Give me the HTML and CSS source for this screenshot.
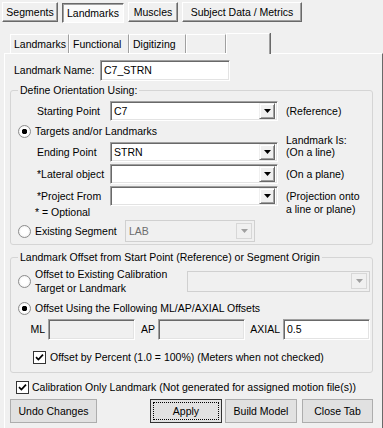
FILE: index.html
```html
<!DOCTYPE html>
<html lang="en">
<head>
  <meta charset="UTF-8" />
  <title>Landmarks</title>
  <link rel="stylesheet" href="styles.css">
</head>
<body>

<div class="maintabs">
  <div class="maintab w-seg">Segments</div>
  <div class="maintab active w-lmk">Landmarks</div>
  <div class="maintab w-mus">Muscles</div>
  <div class="maintab w-sub">Subject Data / Metrics</div>
</div>

<div class="subtabs">
  <div class="subtab w-s1">Landmarks</div>
  <div class="subtab w-s2">Functional</div>
  <div class="subtab w-s3">Digitizing</div>
  <div class="subtab w-s4"></div>
  <div class="subtab current w-s5"></div>
</div>

<div class="panel">
  <div class="name-row">
    <span class="name-lbl">Landmark Name:</span>
    <div class="edit name-edit">C7_STRN</div>
  </div>

  <fieldset class="group g1">
    <legend>Define Orientation Using:</legend>

    <div class="frow start-row">
      <span class="lbl">Starting Point</span>
      <div class="select wide"><span class="val">C7</span><span class="arrow"><svg width="7" height="4"><path d="M0 0h7L3.5 4z"/></svg></span></div>
      <span class="note">(Reference)</span>
    </div>

    <div class="frow radio-row targets">
      <span class="radio checked"></span>
      <span class="rtext clip">Targets and/or Landmarks</span>
      <span class="is-note">Landmark Is:</span>
    </div>

    <div class="frow">
      <span class="lbl">Ending Point</span>
      <div class="select wide"><span class="val">STRN</span><span class="arrow"><svg width="7" height="4"><path d="M0 0h7L3.5 4z"/></svg></span></div>
      <span class="note">(On a line)</span>
    </div>

    <div class="frow gap2">
      <span class="lbl">*Lateral object</span>
      <div class="select wide"><span class="val"></span><span class="arrow"><svg width="7" height="4"><path d="M0 0h7L3.5 4z"/></svg></span></div>
      <span class="note">(On a plane)</span>
    </div>

    <div class="frow gap2">
      <span class="lbl">*Project From</span>
      <div class="select wide"><span class="val"></span><span class="arrow"><svg width="7" height="4"><path d="M0 0h7L3.5 4z"/></svg></span></div>
      <span class="note two">(Projection onto<br>a line or plane)</span>
    </div>

    <div class="optional">* = Optional</div>

    <div class="frow seg-row">
      <span class="radio"></span>
      <span class="rtext seg-text">Existing Segment</span>
      <div class="select disabled seg-sel"><span class="val">LAB</span><span class="arrow"><svg width="7" height="4"><path d="M0 0h7L3.5 4z"/></svg></span></div>
    </div>
  </fieldset>

  <fieldset class="group g2">
    <legend>Landmark Offset from Start Point (Reference) or Segment Origin</legend>

    <div class="frow calib-row">
      <span class="radio"></span>
      <span class="rtext calib-text">Offset to Existing Calibration<br>Target or Landmark</span>
      <div class="select disabled calib-sel"><span class="val"></span><span class="arrow"><svg width="7" height="4"><path d="M0 0h7L3.5 4z"/></svg></span></div>
    </div>

    <div class="frow offs-row">
      <span class="radio checked"></span>
      <span class="rtext">Offset Using the Following ML/AP/AXIAL Offsets</span>
    </div>

    <div class="axes">
      <span class="ax-lbl">ML</span>
      <div class="edit disabled"></div>
      <span class="ax-lbl">AP</span>
      <div class="edit disabled"></div>
      <span class="ax-lbl">AXIAL</span>
      <div class="edit">0.5</div>
    </div>

    <div class="frow pct-row">
      <span class="check"><svg width="9" height="9" viewBox="0 0 9 9"><path d="M1 4.2l2.4 2.4L8 1.6" stroke="#000" stroke-width="1.7" fill="none"/></svg></span>
      <span class="ctext">Offset by Percent (1.0 = 100%) (Meters when not checked)</span>
    </div>
  </fieldset>

  <div class="frow calib-only">
    <span class="check"><svg width="9" height="9" viewBox="0 0 9 9"><path d="M1 4.2l2.4 2.4L8 1.6" stroke="#000" stroke-width="1.7" fill="none"/></svg></span>
    <span class="ctext">Calibration Only Landmark (Not generated for assigned motion file(s))</span>
  </div>

  <div class="actions">
    <button class="btn b-undo">Undo Changes</button>
    <button class="btn b-apply focused">Apply</button>
    <button class="btn b-build">Build Model</button>
    <button class="btn b-close">Close Tab</button>
  </div>
</div>

</body>
</html>
```

FILE: styles.css
```css
:root {
  --face: #f0f0f0;
  --light: #ffffff;
  --shadow: #a0a0a0;
  --dark: #696969;
  --group: #d5d5d5;
}

* {
  box-sizing: border-box;
}

body {
  margin: 0;
  width: 383px;
  height: 428px;
  overflow: hidden;
  background-color: var(--face);
  font-family: "Liberation Sans", Arial, sans-serif;
  font-size: 10.5px;
  line-height: 13px;
  color: #000;
}

/* top tab buttons */
.maintabs {
  display: flex;
  align-items: flex-start;
  height: 24px;
  padding: 2px 0 0 2px;
}

.maintab {
  display: flex;
  align-items: center;
  justify-content: center;
  height: 20px;
  margin-right: 4px;
  border: 1px solid;
  border-color: var(--light) var(--dark) var(--dark) var(--light);
  box-shadow: inset -1px -1px 0 var(--shadow);
  white-space: nowrap;
}

.maintab.active {
  margin-top: 1px;
  background-color: #fafafa;
  border-color: var(--dark) var(--light) var(--light) var(--dark);
  box-shadow: inset 1px 1px 0 var(--shadow);
}

.w-seg { width: 56px; }
.w-lmk { width: 62px; }
.w-mus { width: 50px; }
.w-sub { width: 120px; }

/* inner tabs */
.subtabs {
  display: flex;
  align-items: flex-end;
  height: 29px;
  padding-left: 10px;
}

.subtab {
  height: 19px;
  padding-left: 3px;
  padding-top: 3px;
  border-top: 1px solid var(--light);
  border-left: 1px solid var(--light);
  border-right: 1px solid var(--shadow);
  box-shadow: 1px 0 0 var(--dark);
  white-space: nowrap;
}

.subtab.current {
  position: relative;
  z-index: 1;
  height: 21px;
  margin-bottom: -1px;
  background-color: var(--face);
}

.w-s1 { width: 59px; }
.w-s2 { width: 60px; }
.w-s3 { width: 57px; }
.w-s4 { width: 40px; }
.w-s5 { width: 44px; }

.panel {
  height: 376px;
  margin-left: 4px;
  padding: 6px 0 0 5px;
  border-top: 1px solid var(--light);
  border-left: 1px solid var(--light);
  border-right: 1px solid var(--dark);
}

/* edits and combos */
.edit, .select {
  height: 20px;
  background-color: #fff;
  border: 1px solid;
  border-color: var(--shadow) var(--light) var(--light) var(--shadow);
  box-shadow: inset 1px 1px 0 var(--dark), inset -1px -1px 0 #e3e3e3;
  padding: 3px 0 0 3px;
  white-space: nowrap;
}

.edit.disabled {
  background-color: var(--face);
}

.select {
  display: flex;
  align-items: center;
  padding: 2px;
}

.select .val {
  flex: 1;
  padding-left: 1px;
}

.arrow {
  display: flex;
  align-items: center;
  justify-content: center;
  width: 16px;
  height: 16px;
  background-color: var(--face);
  border: 1px solid;
  border-color: var(--face) var(--dark) var(--dark) var(--face);
  box-shadow: inset 1px 1px 0 var(--light), inset -1px -1px 0 var(--shadow);
}

.arrow svg {
  fill: #000;
}

.select.disabled {
  background-color: var(--face);
  border-color: #d0d0d0;
  box-shadow: none;
  color: #6d6d6d;
}

.select.disabled .arrow {
  border-color: #d7d7d7;
  box-shadow: none;
}

.select.disabled .arrow svg {
  fill: #a0a0a0;
}

.name-row {
  display: flex;
  align-items: center;
  height: 21px;
  padding-left: 4px;
}

.name-lbl {
  width: 86px;
}

.name-edit {
  width: 130px;
  height: 21px;
}

/* group boxes */
.group {
  width: 363px;
  min-width: 0;
  margin: 0;
  padding: 0;
  border: 1px solid var(--group);
  border-radius: 3px;
}

.group legend {
  margin-left: 7px;
  padding: 0 2px;
}

.g1 {
  margin-top: 3px;
  padding-bottom: 2px;
}

.g2 {
  margin-top: 6px;
  padding-bottom: 8px;
}

.frow {
  display: flex;
  align-items: center;
  height: 20px;
}

.gap2 {
  margin-top: 2px;
}

.start-row {
  margin-top: 4px;
}

.lbl {
  width: 99px;
  padding-left: 26px;
  white-space: nowrap;
}

.wide {
  width: 168px;
}

.note {
  margin-left: 8px;
  white-space: nowrap;
}

.note.two {
  align-self: flex-start;
  padding-top: 4px;
}

.radio {
  flex: none;
  width: 13px;
  height: 13px;
  margin-left: 7px;
  border: 1px solid #8c8c8c;
  border-radius: 50%;
  background: radial-gradient(circle, #ffffff 40%, #e8e8e8 100%);
}

.radio.checked {
  background: radial-gradient(circle, #000 0 2.5px, #ffffff 3px, #ffffff 45%, #e8e8e8 100%);
}

.rtext {
  margin-left: 4px;
  white-space: nowrap;
}

.targets {
  height: 21px;
}

.clip {
  width: 122px;
}

.is-note {
  align-self: flex-end;
  margin-left: 129px;
  margin-bottom: -5px;
  white-space: nowrap;
}

.optional {
  height: 13px;
  padding-left: 24px;
}

.seg-row {
  height: 22px;
  margin-top: 1px;
}

.seg-text {
  width: 90px;
}

.seg-sel {
  width: 130px;
  height: 22px;
}

.calib-row {
  height: 28px;
  margin-top: 3px;
}

.calib-text {
  width: 152px;
  line-height: 14px;
}

.calib-sel {
  width: 183px;
  height: 21px;
}

.offs-row {
  height: 14px;
  margin-top: 6px;
}

.axes {
  display: grid;
  grid-template-columns: 37px 87px 23px 87px 38px 87px;
  align-items: center;
  height: 21px;
  margin-top: 4px;
}

.axes .edit {
  height: 21px;
}

.ax-lbl {
  text-align: right;
  padding-right: 3px;
}

.check {
  display: flex;
  flex: none;
  align-items: center;
  justify-content: center;
  width: 13px;
  height: 13px;
  background-color: #fff;
  border: 1px solid #333;
}

.ctext {
  margin-left: 4px;
  white-space: nowrap;
}

.pct-row {
  height: 14px;
  margin-top: 10px;
}

.pct-row .check {
  margin-left: 22px;
}

.calib-only {
  height: 14px;
  margin-top: 7px;
}

.calib-only .check {
  margin-left: 6px;
}

.calib-only .ctext {
  margin-left: 3px;
}

/* buttons */
.actions {
  display: flex;
  margin-top: 5px;
}

.btn {
  height: 24px;
  padding: 0;
  background-color: #e1e1e1;
  border: 1px solid #adadad;
  font-family: inherit;
  font-size: 10.5px;
  color: #000;
}

.btn.focused {
  border-color: #333;
  outline: 1px dotted #000;
  outline-offset: -4px;
}

.b-undo { width: 87px; }
.b-apply { width: 72px; margin-left: 53px; }
.b-build { width: 72px; margin-left: 3px; }
.b-close { width: 71px; margin-left: 5px; }
```
